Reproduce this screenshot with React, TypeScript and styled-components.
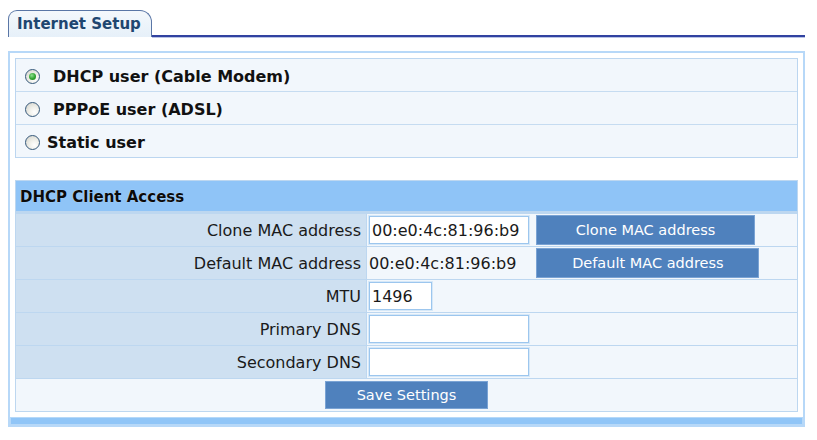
import React from 'react';
import styled, { createGlobalStyle } from 'styled-components';

const GlobalStyle = createGlobalStyle`
  body {
    margin: 8px;
    background: #ffffff;
    font-family: "DejaVu Sans", Verdana, sans-serif;
    color: #1a1a1a;
  }
`;

const Page = styled.div`
  width: 797px;
`;

// Tab header

const TabBar = styled.div`
  display: flex;
  align-items: flex-end;
  height: 29px;
`;

const Tab = styled.div`
  width: 144px;
  height: 27px;
  box-sizing: border-box;
  padding: 4px 0 0 8px;
  background: linear-gradient(#f4f8fc, #e6f0f9);
  border: 1px solid #5a76a6;
  border-bottom: none;
  border-radius: 9px 12px 0 0;
  font-size: 15px;
  font-weight: bold;
  color: #1f4670;
`;

const TabLine = styled.div`
  flex: 1;
  border-bottom: 2px solid #3142a0;
  box-shadow: 0 1px 0 #b9c3e6;
`;

// Outer frame

const Frame = styled.div`
  margin-top: 14px;
  border: 2px solid #b7d8f8;
  padding-top: 5px;
`;

const RadioTable = styled.div`
  margin: 0 5px;
  border: 1px solid #bcd6f0;
  background: #f2f7fc;
`;

const RadioRow = styled.label`
  display: flex;
  align-items: center;
  height: 32px;
  padding: 2px 0 0 9px;
  box-sizing: border-box;
  font-size: 16px;
  font-weight: bold;
  color: #111;
  & + & {
    height: 33px;
    border-top: 1px solid #c6dcf1;
  }
`;

const Radio = styled.span<{ $checked?: boolean; $gap: number }>`
  position: relative;
  width: 15px;
  height: 15px;
  box-sizing: border-box;
  border-radius: 50%;
  border: 1px solid #35587a;
  background: radial-gradient(circle at 65% 70%, #ffffff 0%, #f0f0ea 40%, #d0d0c8 100%);
  margin-right: ${(p) => p.$gap}px;
  flex-shrink: 0;
  &::after {
    content: '';
    display: ${(p) => (p.$checked ? 'block' : 'none')};
    position: absolute;
    left: 3px;
    top: 3px;
    width: 7px;
    height: 7px;
    border-radius: 50%;
    background: radial-gradient(circle at 40% 35%, #8fe08f 0%, #2fa32f 55%, #1d7f1d 100%);
  }
`;

// Form table

const FormTable = styled.div`
  margin: 22px 5px 0;
  display: grid;
  grid-template-columns: 350px 1fr;
  grid-auto-rows: 32px;
  gap: 1px;
  padding: 1px;
  background: #bdd7f0;
`;

const SectionHead = styled.div`
  grid-column: 1 / -1;
  height: 30px;
  display: flex;
  align-items: center;
  padding: 2px 0 0 4px;
  box-sizing: border-box;
  background: #8fc4f7;
  font-size: 15px;
  font-weight: bold;
  color: #0b0b0b;
  text-shadow: 0 0 1px rgba(255, 255, 255, 0.6);
`;

const LabelCell = styled.div`
  display: flex;
  align-items: center;
  justify-content: flex-end;
  padding: 1px 5px 0 0;
  background: #cee0f1;
  font-size: 16px;
  color: #1a1a1a;
`;

const ValueCell = styled.div<{ $center?: boolean }>`
  display: flex;
  align-items: center;
  justify-content: ${(p) => (p.$center ? 'center' : 'flex-start')};
  padding-left: ${(p) => (p.$center ? 0 : 2)}px;
  background: #f2f7fc;
  font-size: 16px;
  color: #1a1a1a;
  grid-column: ${(p) => (p.$center ? '1 / -1' : 'auto')};
`;

const TextInput = styled.input<{ $w: number }>`
  width: ${(p) => p.$w}px;
  height: 28px;
  box-sizing: border-box;
  margin: 0;
  padding: 0 2px;
  border: 1px solid #9cc6ee;
  outline: 1px solid #d6e8f8;
  background: #fff;
  font-family: "DejaVu Sans", Verdana, sans-serif;
  font-size: 16px;
  color: #1a1a1a;
`;

const Plain = styled.span`
  white-space: nowrap;
`;

const Button = styled.button<{ $w: number; $h?: number; $ml?: number }>`
  width: ${(p) => p.$w}px;
  height: ${(p) => p.$h ?? 30}px;
  margin: 0 0 0 ${(p) => p.$ml ?? 0}px;
  padding: 0;
  border: 1px solid #7aa3d4;
  background: #4f81bd;
  color: #ffffff;
  font-family: "DejaVu Sans", Verdana, sans-serif;
  font-size: 14.5px;
  cursor: pointer;
`;

const BottomBar = styled.div`
  margin-top: 5px;
  height: 8px;
  background: #90c5f7;
  border: 1px solid #b6d8f8;
  box-sizing: border-box;
`;

const modes = [
  { label: 'DHCP user (Cable Modem)', checked: true, gap: 13 },
  { label: 'PPPoE user (ADSL)', checked: false, gap: 13 },
  { label: 'Static user', checked: false, gap: 7 },
];

export default function App() {
  return (
    <Page>
      <GlobalStyle />
      <TabBar>
        <Tab>Internet Setup</Tab>
        <TabLine />
      </TabBar>
      <Frame>
        <RadioTable>
          {modes.map((m) => (
            <RadioRow key={m.label}>
              <Radio $checked={m.checked} $gap={m.gap} />
              {m.label}
            </RadioRow>
          ))}
        </RadioTable>

        <FormTable>
          <SectionHead>DHCP Client Access</SectionHead>

          <LabelCell>Clone MAC address</LabelCell>
          <ValueCell>
            <TextInput $w={160} defaultValue="00:e0:4c:81:96:b9" />
            <Button $w={219} $ml={7}>Clone MAC address</Button>
          </ValueCell>

          <LabelCell>Default MAC address</LabelCell>
          <ValueCell>
            <Plain>00:e0:4c:81:96:b9</Plain>
            <Button $w={223} $ml={20}>Default MAC address</Button>
          </ValueCell>

          <LabelCell>MTU</LabelCell>
          <ValueCell>
            <TextInput $w={63} defaultValue="1496" />
          </ValueCell>

          <LabelCell>Primary DNS</LabelCell>
          <ValueCell>
            <TextInput $w={160} />
          </ValueCell>

          <LabelCell>Secondary DNS</LabelCell>
          <ValueCell>
            <TextInput $w={160} />
          </ValueCell>

          <ValueCell $center>
            <Button $w={163} $h={28}>Save Settings</Button>
          </ValueCell>
        </FormTable>

        <BottomBar />
      </Frame>
    </Page>
  );
}
